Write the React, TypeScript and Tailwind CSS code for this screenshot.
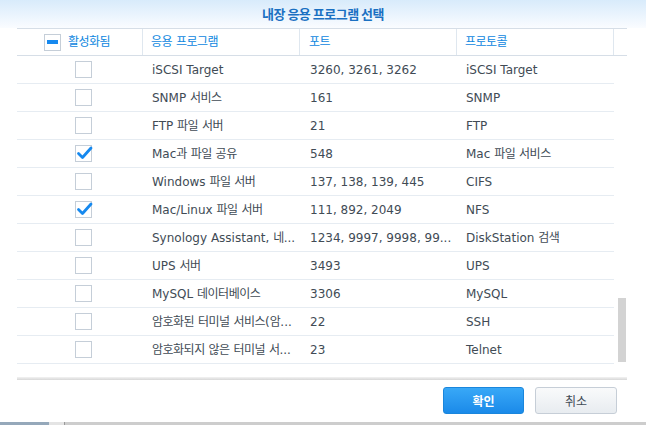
import React from "react";

type Row = { on: boolean; app: string; port: string; proto: string };

const rows: Row[] = [
  { on: false, app: "iSCSI Target", port: "3260, 3261, 3262", proto: "iSCSI Target" },
  { on: false, app: "SNMP 서비스", port: "161", proto: "SNMP" },
  { on: false, app: "FTP 파일 서버", port: "21", proto: "FTP" },
  { on: true, app: "Mac과 파일 공유", port: "548", proto: "Mac 파일 서비스" },
  { on: false, app: "Windows 파일 서버", port: "137, 138, 139, 445", proto: "CIFS" },
  { on: true, app: "Mac/Linux 파일 서버", port: "111, 892, 2049", proto: "NFS" },
  { on: false, app: "Synology Assistant, 네...", port: "1234, 9997, 9998, 99...", proto: "DiskStation 검색" },
  { on: false, app: "UPS 서버", port: "3493", proto: "UPS" },
  { on: false, app: "MySQL 데이터베이스", port: "3306", proto: "MySQL" },
  { on: false, app: "암호화된 터미널 서비스(암...", port: "22", proto: "SSH" },
  { on: false, app: "암호화되지 않은 터미널 서...", port: "23", proto: "Telnet" },
];

function Txt({ s }: { s: string }) {
  return (
    <span>
      {s.split(/([\uac00-\ud7a3]+)/).map((p, i) =>
        /[\uac00-\ud7a3]/.test(p) ? (
          <span key={i} className="text-[12px] tracking-[-0.5px]">
            {p}
          </span>
        ) : (
          p
        )
      )}
    </span>
  );
}

function CheckBox({ on }: { on: boolean }) {
  return (
    <div className="flex h-[17px] w-[17px] items-center justify-center border border-[#c5ced8] bg-white">
      {on && (
        <svg width="17" height="17" viewBox="0 0 17 17" className="-mr-[2px]">
          <polyline
            points="2.5,8.5 6.5,12.5 15,3"
            fill="none"
            stroke="#1689ef"
            strokeWidth="2.8"
            strokeLinecap="round"
            strokeLinejoin="round"
          />
        </svg>
      )}
    </div>
  );
}

export default function App() {
  return (
    <div className="flex h-[425px] w-[646px] flex-col overflow-hidden bg-white font-['DejaVu_Sans','Noto_Sans_CJK_KR',sans-serif] text-[12px] text-[#414b55]">
      {/* Title */}
      <div className="flex h-[28px] shrink-0 items-center justify-center bg-gradient-to-b from-[#d8ebfb] to-[#fafcff]">
        <span className="font-['Noto_Sans_CJK_KR',sans-serif] text-[13px] font-bold tracking-[-0.5px] text-[#1a70c2]">
          내장 응용 프로그램 선택
        </span>
      </div>

      {/* Header */}
      <div className="ml-[17px] flex h-[28px] w-[610px] shrink-0 border-y border-[#d6dee7] text-[#0e87e0]">
        <div className="flex w-[126px] items-center gap-[7px] border-r border-[#dfe7ef] pl-[27px]">
          <div className="flex h-[17px] w-[17px] items-center justify-center border border-[#c5ced8] bg-white">
            <div className="h-[4px] w-[11px] bg-[#1689ef]" />
          </div>
          <Txt s="활성화됨" />
        </div>
        <div className="flex w-[157px] items-center border-r border-[#dfe7ef] pl-[8px]">
          <Txt s="응용 프로그램" />
        </div>
        <div className="flex w-[157px] items-center border-r border-[#dfe7ef] pl-[9px]">
          <Txt s="포트" />
        </div>
        <div className="flex w-[157px] items-center border-r border-[#dfe7ef] pl-[8px]">
          <Txt s="프로토콜" />
        </div>
        <div className="flex-1" />
      </div>

      {/* Body */}
      <div className="ml-[17px] flex h-[308px] w-[610px] shrink-0">
        <div className="flex w-[597px] flex-col">
          {rows.map((r, i) => (
            <div key={i} className="flex h-[28px] items-center border-b border-[#e6ecf2]">
              <div className="flex w-[126px] items-center pl-[58px]">
                <CheckBox on={r.on} />
              </div>
              <div className="w-[157px] truncate pl-[9px]">
                <Txt s={r.app} />
              </div>
              <div className="w-[157px] truncate pl-[10px]">
                <Txt s={r.port} />
              </div>
              <div className="w-[157px] truncate pl-[9px]">
                <Txt s={r.proto} />
              </div>
            </div>
          ))}
        </div>
        <div className="flex flex-1 flex-col justify-end pb-[2px] pl-[4px]">
          <div className="h-[64px] w-[8px] bg-[#d3d3d3]" />
        </div>
      </div>

      {/* Footer */}
      <div className="mt-[13px] ml-[17px] h-[3px] w-[610px] shrink-0 bg-gradient-to-b from-[#f3f3f3] to-[#d7d7d7]" />
      <div className="mt-[7px] flex h-[27px] shrink-0 justify-end gap-[11px] pr-[29px]">
        <button className="w-[81px] rounded-[3px] border border-[#1a86dc] bg-gradient-to-b from-[#38a8f7] to-[#1a8ae9] font-['Noto_Sans_CJK_KR',sans-serif] text-[12px] font-bold text-white">
          확인
        </button>
        <button className="w-[82px] rounded-[3px] border border-[#c6ced7] bg-gradient-to-b from-[#f9fafb] to-[#e8ecf0] font-['Noto_Sans_CJK_KR',sans-serif] text-[12px] text-[#414b55]">
          취소
        </button>
      </div>
      <div className="mt-auto flex h-[3px] shrink-0">
        <div className="w-[49px] bg-[#95a8ba]" />
        <div className="w-[15px] bg-[#e4e4e4]" />
        <div className="flex-1 border-l border-[#9a9a9a] bg-[#cdcdcd]" />
      </div>
    </div>
  );
}
